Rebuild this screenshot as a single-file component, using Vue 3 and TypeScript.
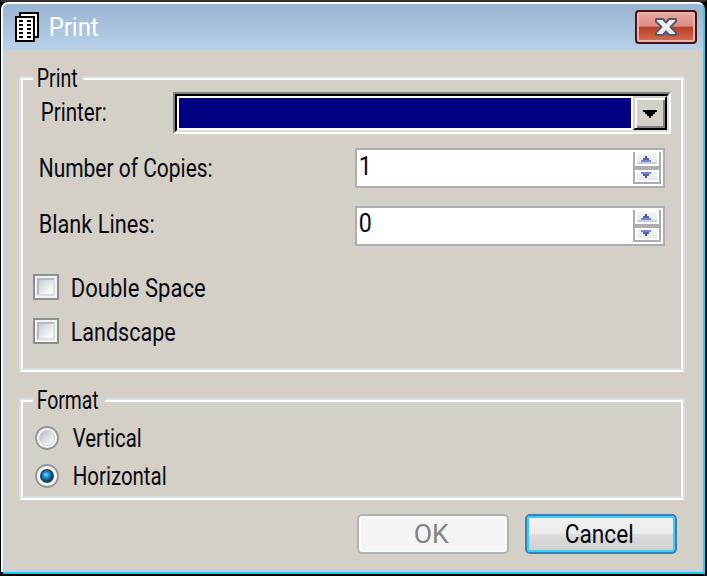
<script setup lang="ts">
import { h, ref } from 'vue'

interface LabelProps {
  text: string
  width: number
}

// Condensed dialog label: the text is fitted to a fixed advance width.
const FitLabel = (props: LabelProps) =>
  h('svg', { class: 'label', width: props.width, height: 32, viewBox: `0 0 ${props.width} 32` }, [
    h('text', { x: 1.7, y: 24.8, textLength: props.width - 2, lengthAdjust: 'spacingAndGlyphs' }, props.text),
  ])
FitLabel.props = ['text', 'width']

const fields = [
  { label: 'Number of Copies:', width: 176, value: '1', valueWidth: 15 },
  { label: 'Blank Lines:', width: 118, value: '0', valueWidth: 15 },
]
const checks = ref([
  { label: 'Double Space', width: 137, checked: false },
  { label: 'Landscape', width: 107, checked: false },
])
const formats = [
  { label: 'Vertical', width: 71 },
  { label: 'Horizontal', width: 96 },
]
const format = ref('Horizontal')
const dashRows = [20, 24, 28, 32, 36]
</script>

<template>
  <div class="window">
    <header class="titlebar">
      <svg class="app-icon" width="24" height="30" viewBox="15 12 24 30" shape-rendering="crispEdges">
        <path fill="#000" d="M19 12h20v26H19z" />
        <path fill="#fff" d="M21 14h16v22H21z" />
        <path fill="#000" d="M15 16h20v26H15z" />
        <path fill="#fff" d="M17 18h16v22H17z" />
        <path v-for="y in dashRows" :key="y" fill="#000" :d="`M19 ${y}h4v2h-4zM27 ${y}h4v2h-4z`" />
      </svg>
      <FitLabel class="title" text="Print" :width="52" />
      <button class="close" aria-label="Close">
        <svg width="24" height="20" viewBox="0 0 24 20">
          <path
            d="M2 2H9L12 5.5 15 2H22V4.5L16.5 10 22 15.5V18H15L12 14.5 9 18H2V15.5L7.5 10 2 4.5Z"
            fill="#eceeef"
            stroke="#565968"
            stroke-width="2"
            stroke-linejoin="round"
          />
        </svg>
      </button>
    </header>

    <main class="client">
      <section class="group print-group">
        <div class="legend"><FitLabel text="Print" :width="43" /></div>
        <div class="printer-row">
          <FitLabel text="Printer:" :width="68" />
          <div class="combo">
            <div class="combo-inner">
              <div class="selection"></div>
              <div class="drop">
                <svg width="14" height="8" viewBox="0 0 14 8" shape-rendering="crispEdges">
                  <path d="M0 0h14v2h-2v2h-2v2H8v2H6V6H4V4H2V2H0z" />
                </svg>
              </div>
            </div>
          </div>
        </div>
        <div v-for="f in fields" :key="f.label" class="field-row">
          <FitLabel :text="f.label" :width="f.width" />
          <div class="spin">
            <FitLabel :text="f.value" :width="f.valueWidth" />
            <div class="spin-buttons">
              <div class="up">
                <svg width="10" height="6" viewBox="0 0 10 6" shape-rendering="crispEdges">
                  <path fill="#4a517a" d="M4 0h2v2H4z" />
                  <path fill="#5566a5" d="M2 2h6v2H2z" />
                  <path fill="#6d87d1" d="M0 4h10v2H0z" />
                </svg>
              </div>
              <div class="down">
                <svg width="10" height="6" viewBox="0 0 10 6" shape-rendering="crispEdges">
                  <path fill="#6d87d1" d="M0 0h10v2H0z" />
                  <path fill="#5566a5" d="M2 2h6v2H2z" />
                  <path fill="#4a517a" d="M4 4h2v2H4z" />
                </svg>
              </div>
            </div>
          </div>
        </div>
        <div class="checks">
          <div v-for="c in checks" :key="c.label" class="check-row" @click="c.checked = !c.checked">
            <span class="box"><span class="box-inner"></span></span>
            <FitLabel :text="c.label" :width="c.width" />
          </div>
        </div>
      </section>

      <section class="group format-group">
        <div class="legend"><FitLabel text="Format" :width="64" /></div>
        <div class="radios">
          <div v-for="r in formats" :key="r.label" class="radio-row" @click="format = r.label">
            <svg class="radio" width="24" height="24" viewBox="0 0 24 24">
              <defs>
                <linearGradient id="well" x1="0" y1="0" x2="1" y2="1">
                  <stop offset="0.1" stop-color="#b9bdc4" />
                  <stop offset="0.8" stop-color="#f5f5f5" />
                </linearGradient>
                <radialGradient id="dot" cx="0.42" cy="0.38" r="0.6">
                  <stop offset="0" stop-color="#8fdcff" />
                  <stop offset="0.3" stop-color="#2ba7e0" />
                  <stop offset="0.65" stop-color="#0f76ab" />
                  <stop offset="1" stop-color="#123a58" />
                </radialGradient>
              </defs>
              <circle cx="12" cy="12" r="11" fill="#f4f4f4" stroke="#949697" stroke-width="1.8" />
              <template v-if="format === r.label">
                <circle cx="12" cy="12" r="7" fill="#24445c" />
                <circle cx="12" cy="12" r="5.4" fill="url(#dot)" />
              </template>
              <circle v-else cx="12" cy="12" r="7.5" fill="url(#well)" stroke="#cdd0d3" />
            </svg>
            <FitLabel :text="r.label" :width="r.width" />
          </div>
        </div>
      </section>

      <footer class="actions">
        <button class="btn disabled" disabled><FitLabel text="OK" :width="37" /></button>
        <button class="btn default"><FitLabel text="Cancel" :width="71" /></button>
      </footer>
    </main>
  </div>
</template>

<style>
body {
  margin: 0;
  background: #000;
  overflow: hidden;
}
</style>

<style scoped>
* {
  box-sizing: border-box;
}
.window {
  width: 707px;
  height: 576px;
  border: solid;
  border-width: 2px 2px 2px 1px;
  border-color: #373130 #000 #000;
  background: #000;
  display: flex;
  flex-direction: column;
}
.label {
  display: block;
  flex: none;
  overflow: visible;
  font-family: Roboto, 'Liberation Sans', sans-serif;
  font-size: 25px;
  fill: #08080f;
}
.titlebar {
  height: 48px;
  flex: none;
  display: flex;
  align-items: flex-start;
  border-top: 2px solid #fff;
  border-left: 2px solid #fff;
  border-right: 2px solid #43c7ee;
  border-radius: 7px 7px 0 0;
  background: linear-gradient(#99b4d1, #b9d1ea);
  padding: 0 6px 0 12px;
}
.app-icon {
  margin-top: 8px;
}
.title {
  margin: 7px 0 0 8px;
  fill: #fff;
}
.close {
  margin: 6px 0 0 auto;
  width: 62px;
  height: 34px;
  padding: 0;
  display: flex;
  align-items: center;
  justify-content: center;
  border: 2px solid #47131c;
  border-radius: 4px;
  background: linear-gradient(#e9a99f 0, #de8d80 48%, #b83c22 49%, #d17059 100%);
  box-shadow: inset 0 0 0 2px #eab5ac;
}
.client {
  flex: 1;
  border: 2px solid #b9d1ea;
  border-top: 0;
  background: #d4d0c8;
  box-shadow: -2px 0 #fff, 2px 0 #43c7ee, 0 2px #1fc8ea, 2px 2px #1fc8ea;
  margin: 0 2px 2px;
  padding: 26px 16px 0 14px;
}
.group {
  position: relative;
  width: 666px;
  border: 2px solid #d5dfe5;
  border-bottom-color: #fff;
  border-radius: 3px;
}
.group::before {
  content: '';
  position: absolute;
  inset: 0;
  border: 2px solid #fff;
  border-bottom-color: #d5dfe5;
  pointer-events: none;
}
.print-group {
  height: 296px;
}
.format-group {
  height: 102px;
  margin-top: 26px;
}
.legend {
  position: absolute;
  left: 12px;
  top: -16px;
  background: #d4d0c8;
  padding: 0 4px 0 2px;
}
.print-group .legend {
  width: 50px;
}
.format-group .legend {
  width: 72px;
}
.printer-row {
  display: flex;
  justify-content: space-between;
  align-items: flex-start;
  padding: 14px 12px 0 18px;
}
.printer-row > .label {
  margin-top: 4px;
}
.combo {
  width: 498px;
  height: 42px;
  border: 2px solid #808080;
  border-right-color: #fff;
  border-bottom-color: #fff;
}
.combo-inner {
  height: 38px;
  border: 2px solid #000;
  border-right-color: #dfdfdf;
  border-bottom-color: #dfdfdf;
  background: #fff;
  display: flex;
}
.selection {
  flex: 1;
  margin: 2px;
  background: #000080;
}
.drop {
  width: 34px;
  border: 2px solid #d4d0c8;
  border-right-color: #000;
  border-bottom-color: #000;
  background: #d4d0c8;
  box-shadow: inset 2px 2px #fff, inset -2px -2px #808080;
  display: flex;
  justify-content: center;
  padding-top: 12px;
}
.field-row {
  display: flex;
  justify-content: space-between;
  height: 40px;
  margin-top: 18px;
  padding: 0 18px 0 16px;
}
.printer-row + .field-row {
  margin-top: 14px;
}
.field-row > .label {
  margin-top: 4px;
}
.field-row + .field-row > .label {
  margin-top: 2px;
}
.spin {
  width: 310px;
  height: 40px;
  border: 2px solid #abadb3;
  background: #fff;
  display: flex;
  justify-content: space-between;
  padding: 2px;
}
.spin > .label {
  margin: -2px 0 0 -2px;
}
.field-row + .field-row .spin > .label {
  margin-top: -3px;
}
.spin-buttons {
  width: 28px;
  height: 32px;
  border: 2px solid #abadb3;
  border-top: 0;
}
.up,
.down {
  display: flex;
  justify-content: center;
  border: 2px solid #fff;
  padding-right: 2px;
  background: linear-gradient(#f2f2f2, #e8e8e8);
}
.up {
  height: 14px;
  padding-top: 2px;
  box-shadow: inset 0 -2px #cfcfcf;
}
.down {
  height: 12px;
  margin-top: 4px;
  box-shadow: 0 -4px #abadb3;
}
.checks {
  padding: 28px 0 0 12px;
  display: grid;
  gap: 18px;
}
.check-row {
  display: flex;
  height: 26px;
  gap: 10px;
}
.check-row .label {
  margin-top: -2px;
}
.box {
  width: 26px;
  height: 26px;
  border: 2px solid #8e8f8f;
  background: #f4f4f4;
  padding: 2px;
}
.box-inner {
  display: block;
  width: 18px;
  height: 18px;
  border: 2px solid #b5b9be;
  border-right-color: #dedfe1;
  border-bottom-color: #dedfe1;
  background: linear-gradient(135deg, #c8ccd5, #f6f6f6 75%);
}
.radios {
  padding: 26px 0 0 14px;
  display: grid;
  gap: 14px;
}
.radio-row {
  display: flex;
  height: 24px;
  gap: 12px;
}
.radio-row .label {
  margin-top: -4px;
}
.actions {
  display: flex;
  justify-content: flex-end;
  gap: 16px;
  padding: 14px 8px 0 0;
}
.btn {
  width: 152px;
  height: 40px;
  padding: 0;
  display: flex;
  justify-content: center;
  border: 2px solid #adb2b5;
  border-radius: 5px;
  background: #f4f4f4;
  box-shadow: inset 0 0 0 2px #fcfcfc;
}
.btn .label {
  margin: 2px 6px 0 0;
}
.disabled .label {
  fill: #838383;
}
.default {
  border-color: #3c7fb1;
  background: linear-gradient(#f2f2f2 0, #ebebeb 49%, #dddddd 50%, #cfcfcf 100%);
  box-shadow: inset 0 0 0 2px #3dcdf3;
}
</style>
